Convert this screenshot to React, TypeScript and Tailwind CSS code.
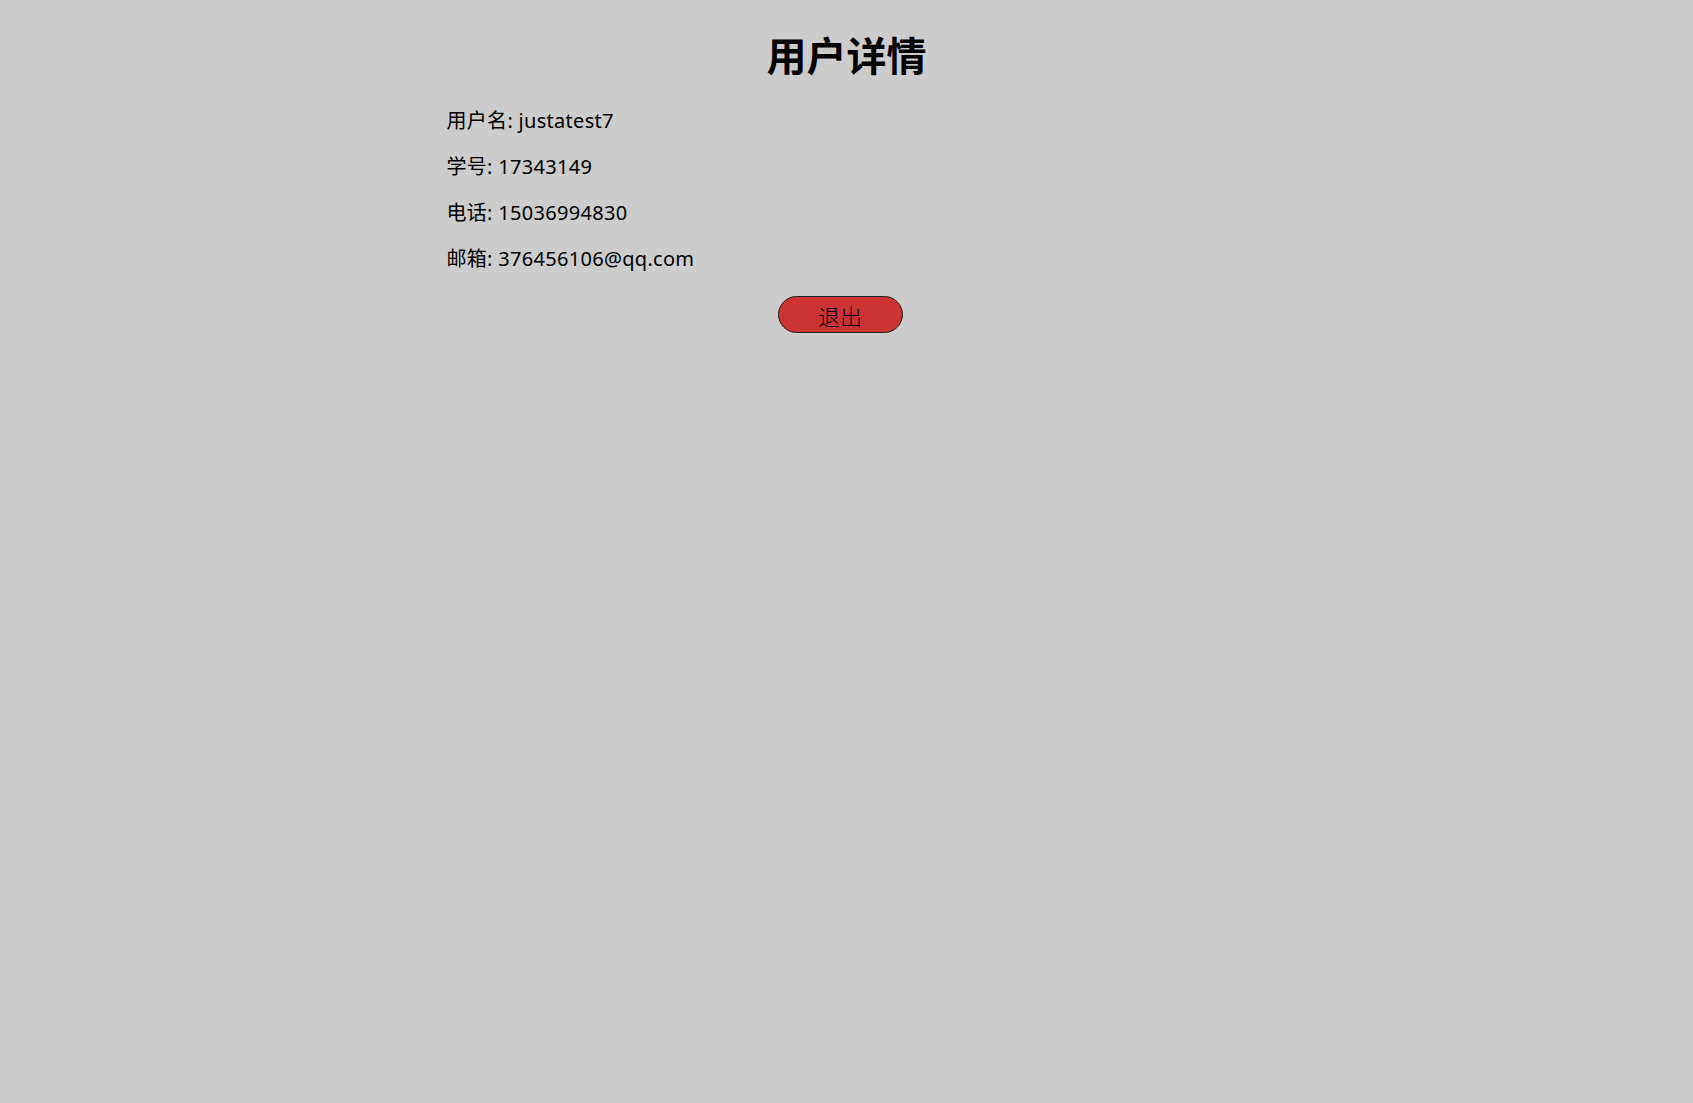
export default function App() {
  const font = { fontFamily: '"Noto Sans", "Noto Sans CJK SC", sans-serif' };
  return (
    <div className="min-h-[1103px] w-full bg-[#cccccc] text-black" style={font}>
      <div className="mx-auto w-[800px] pt-[30px]">
        <h1 className="text-center text-[40px] font-bold leading-[52px]">用户详情</h1>
        <div className="mt-[25px] flex flex-col gap-[18px] text-[20px] leading-[28px] tracking-[0.3px]">
          <p>用户名: justatest7</p>
          <p>学号: 17343149</p>
          <p>电话: 15036994830</p>
          <p>邮箱: 376456106@qq.com</p>
        </div>
        <div className="mt-[23px] flex justify-center">
          <button className="mr-[13px] h-[37px] w-[125px] rounded-full border border-[#222] bg-[#cc3333] pt-[3px] text-[22px] font-light leading-none text-black">
            退出
          </button>
        </div>
      </div>
    </div>
  );
}
